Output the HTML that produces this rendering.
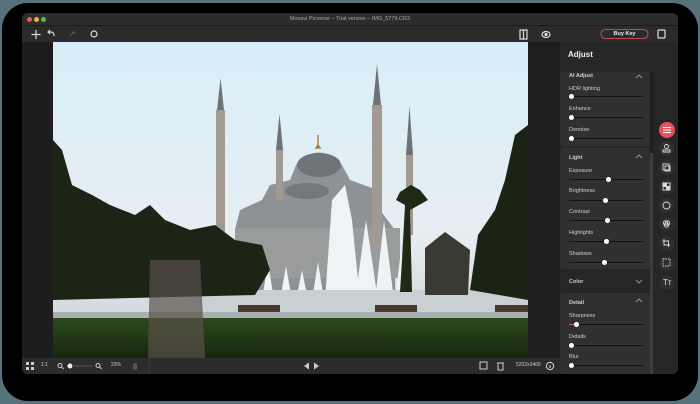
<!DOCTYPE html>
<html><head><meta charset="utf-8"><style>
*{margin:0;padding:0;box-sizing:border-box}
body{width:700px;height:404px;background:#56727a;position:relative;overflow:hidden;font-family:"Liberation Sans",sans-serif}
.shadow{position:absolute;left:2px;top:3px;width:696px;height:398px;background:#000;border-radius:26px}
.win{position:absolute;left:22px;top:13px;width:656px;height:361px;background:#2a2a2a;border-radius:6px;overflow:hidden}
.abs{position:absolute}
.t{position:absolute;color:#cfcfcf;font-size:5.5px;white-space:nowrap}
.card{position:absolute;left:538px;width:90px;background:#303030;border-radius:3px}
.track{position:absolute;height:1px;background:#111;width:74px;left:547px}
.knob{position:absolute;width:5px;height:5px;border-radius:50%;background:#fff}
.ic{position:absolute;width:15px;height:15px;border-radius:50%;background:#2f2f2f;left:637px}
</style></head><body>
<div class="shadow"></div>
<div class="win">
 <div class="abs" style="left:0;top:0;width:656px;height:13px;background:#2c2c2c;border-bottom:1px solid #1a1a1a"></div>
 <div class="abs" style="left:5px;top:4px;width:5px;height:5px;border-radius:50%;background:#ee5a55"></div>
 <div class="abs" style="left:12px;top:4px;width:5px;height:5px;border-radius:50%;background:#e7b33a"></div>
 <div class="abs" style="left:19px;top:4px;width:5px;height:5px;border-radius:50%;background:#4fbf4a"></div>
 <div class="t" style="left:0;width:656px;text-align:center;top:3px;font-size:5.5px;color:#aaa">Movavi Picverse – Trial version – IMG_5779.CR2</div>
 <div class="abs" style="left:0;top:14px;width:656px;height:15px;background:#2b2b2b"></div>
 <svg class="abs" style="left:0;top:13px" width="656" height="17" fill="none" stroke="#ddd" stroke-width="1.2">
  <path d="M14 4v9M9.5 8.5h9"/>
  <path d="M32 10v-1a3 3 0 0 0-3-3h-3M28 4l-2 2 2 2"/>
  <path d="M48 10l4-4M50 6h2v2" stroke="#555"/>
  <circle cx="72" cy="8" r="3"/>
  <path d="M498 4h7v9h-7zM501.5 4v9"/>
  <ellipse cx="524" cy="8.5" rx="4" ry="3"/><circle cx="524" cy="8.5" r="1" fill="#ddd"/>
  <rect x="579" y="3.5" width="47" height="9" rx="4.5" stroke="#c04a5a" stroke-width="1.1"/>
  <rect x="636" y="4" width="7" height="8" rx="1"/>
 </svg>
 <div class="t" style="left:579px;top:18px;width:47px;text-align:center;font-weight:bold;color:#eee;font-size:5.5px">Buy Key</div>
 <div class="abs" style="left:0;top:29px;width:538px;height:316px;background:#1d1d1d"></div>
 <svg class="abs" style="left:31px;top:29px" width="475" height="316" viewBox="53 42 475 316">
  <defs>
   <linearGradient id="sky" x1="0" y1="0" x2="0" y2="1"><stop offset="0" stop-color="#d9eef8"/><stop offset="0.6" stop-color="#e6eef2"/><stop offset="1" stop-color="#c8d0d6"/></linearGradient>
   <linearGradient id="gr" x1="0" y1="0" x2="0" y2="1"><stop offset="0" stop-color="#2d4a1c"/><stop offset="1" stop-color="#16260f"/></linearGradient>
  </defs>
  <rect x="53" y="42" width="475" height="316" fill="url(#sky)"/>
  <path d="M235 230 L240 210 L262 200 L270 185 L290 180 L296 165 Q319 140 342 165 L350 180 L372 188 L380 210 L395 230 L395 300 L235 300Z" fill="#8e9296"/>
  <ellipse cx="319" cy="165" rx="22" ry="12" fill="#6e7478"/>
  <ellipse cx="307" cy="191" rx="22" ry="8" fill="#72787c"/>
  <path d="M318 135v10l-2 3h4l-2-3" stroke="#a8893c" stroke-width="1.5"/>
  <rect x="235" y="228" width="165" height="50" fill="#9a9c9c"/>
  <g fill="#a09a92">
   <rect x="216" y="110" width="9" height="122"/><path d="M217 110 L220.5 78 L224 110Z" fill="#6e7276"/>
   <rect x="276" y="150" width="7" height="50"/><path d="M276 150 L279.5 114 L283 150Z" fill="#6e7276"/>
   <rect x="372" y="105" width="10" height="140"/><path d="M373 105 L377 64 L381 105Z" fill="#6e7276"/>
   <rect x="406" y="155" width="7" height="80"/><path d="M406 155 L409.5 106 L413 155Z" fill="#6e7276"/>
  </g>
  <g fill="#eef3f6">
   <path d="M262 300 L268 262 L274 300Z"/><path d="M280 300 L286 266 L292 300Z"/><path d="M296 300 L302 270 L308 300Z"/>
   <path d="M312 300 L318 262 L324 300Z"/>
   <path d="M325 300 L332 200 L345 185 L352 220 L360 300Z"/>
   <path d="M355 300 L366 220 L378 300Z"/>
   <path d="M375 300 L384 220 L394 300Z"/>
   <path d="M395 300 L401 250 L408 300Z"/>
  </g>
  <rect x="200" y="290" width="328" height="24" fill="#c9d0d4"/>
  <path d="M53 140 L62 150 L72 185 L92 195 L110 205 L135 215 L150 205 L165 220 L190 230 L215 225 L235 240 L262 245 L270 270 L255 295 L53 300Z" fill="#1c2416"/>
  <path d="M411 185 L400 192 L396 200 L405 205 L402 260 L400 292 L412 292 L410 210 L428 200 L420 190Z" fill="#1f2a16"/>
  <path d="M528 125 L515 135 L505 180 L495 210 L478 235 L470 290 L528 300Z" fill="#1a2314"/>
  <path d="M425 248 L445 232 L470 250 L468 295 L425 295Z" fill="#3a3a32"/>
  <rect x="238" y="305" width="42" height="8" fill="#4b3a30"/>
  <rect x="375" y="305" width="42" height="8" fill="#4b3a30"/>
  <rect x="495" y="305" width="33" height="8" fill="#4b3a30"/>
  <rect x="53" y="312" width="475" height="6" fill="#a9b0b2"/>
  <rect x="53" y="318" width="475" height="40" fill="url(#gr)"/>
  <path d="M150 260 L200 260 L205 358 L148 358Z" fill="#5a5048" opacity="0.7"/>
 </svg>
 <div class="abs" style="left:0;top:345px;width:538px;height:16px;background:#2c2c2c"></div>
 <svg class="abs" style="left:0;top:345px" width="538" height="16" fill="#ccc" stroke="#ccc">
  <g stroke="none"><rect x="4" y="4" width="3" height="3"/><rect x="9" y="4" width="3" height="3"/><rect x="4" y="9" width="3" height="3"/><rect x="9" y="9" width="3" height="3"/></g>
  <circle cx="38" cy="7.5" r="2" fill="none"/><path d="M39.5 9l2 2"/>
  <circle cx="48" cy="8" r="2.5" stroke="none" fill="#eee"/><path d="M50 8h20" stroke="#555"/>
  <circle cx="76" cy="7.5" r="2" fill="none"/><path d="M77.5 9l2 2"/>
  <rect x="111" y="5" width="4" height="7" rx="2" fill="#555" stroke="none"/>
  <path d="M127 1v15" stroke="#3a3a3a"/>
  <path d="M282 8l5-3.5v7z M292 4.5v7l5-3.5z" stroke="none"/>
  <rect x="458" y="4" width="7" height="7" fill="none"/>
  <rect x="476" y="5" width="5" height="7" fill="none"/><path d="M475 5h7"/>
 </svg>
 <div class="t" style="left:19px;top:349px;font-size:5px">1:1</div>
 <div class="t" style="left:89px;top:349px;font-size:5px">23%</div>
 <div class="t" style="left:494px;top:349px;font-size:5px">5202x3465</div>
 <svg class="abs" style="left:523px;top:348px" width="10" height="10"><circle cx="5" cy="5" r="3.6" fill="none" stroke="#ddd"/><path d="M5 4v3" stroke="#ddd"/></svg>
 <div class="abs" style="left:506px;top:29px;width:32px;height:316px;background:#1e1e1e"></div>
 <div class="abs" style="left:538px;top:29px;width:118px;height:332px;background:#262626"></div>
 <div class="t" style="left:546px;top:37px;font-size:8px;font-weight:bold;color:#eee">Adjust</div>
 <div class="abs" style="left:628px;top:59px;width:3px;height:302px;background:#1e1e1e"></div>
 <div class="abs" style="left:628px;top:140px;width:3px;height:221px;background:#3c3c3c"></div>

 <div class="card" style="top:59px;height:74px"></div>
 <div class="t" style="left:547px;top:60px;font-weight:bold">AI Adjust</div>
 <div class="t" style="left:547px;top:73px">HDR lighting</div><div class="track" style="top:83px"></div><div class="knob" style="left:547px;top:81px"></div>
 <div class="t" style="left:547px;top:93px">Enhance</div><div class="track" style="top:104px"></div><div class="knob" style="left:547px;top:102px"></div>
 <div class="t" style="left:547px;top:114px">Denoise</div><div class="track" style="top:125px"></div><div class="knob" style="left:547px;top:123px"></div>

 <div class="card" style="top:135px;height:121px"></div>
 <div class="t" style="left:547px;top:142px;font-weight:bold">Light</div>
 <div class="t" style="left:547px;top:155px">Exposure</div><div class="track" style="top:166px"></div><div class="knob" style="left:584px;top:164px"></div>
 <div class="t" style="left:547px;top:175px">Brightness</div><div class="track" style="top:187px"></div><div class="knob" style="left:581px;top:185px"></div>
 <div class="t" style="left:547px;top:196px">Contrast</div><div class="track" style="top:207px"></div><div class="knob" style="left:583px;top:205px"></div>
 <div class="t" style="left:547px;top:217px">Highlights</div><div class="track" style="top:228px"></div><div class="knob" style="left:582px;top:226px"></div>
 <div class="t" style="left:547px;top:238px">Shadows</div><div class="track" style="top:249px"></div><div class="knob" style="left:580px;top:247px"></div>

 <div class="t" style="left:547px;top:266px;font-weight:bold">Color</div>
 <div class="card" style="top:280px;height:81px"></div>
 <div class="t" style="left:547px;top:287px;font-weight:bold">Detail</div>
 <div class="t" style="left:547px;top:300px">Sharpness</div><div class="track" style="top:311px"></div><div class="abs" style="left:547px;top:311px;width:7px;height:1px;background:#b55"></div><div class="knob" style="left:552px;top:309px"></div>
 <div class="t" style="left:547px;top:321px">Details</div><div class="track" style="top:332px"></div><div class="knob" style="left:547px;top:330px"></div>
 <div class="t" style="left:547px;top:341px">Blur</div><div class="track" style="top:352px"></div><div class="knob" style="left:547px;top:350px"></div>
 <svg class="abs" style="left:612px;top:60px" width="10" height="230" fill="none" stroke="#aaa" stroke-width="0.8">
  <path d="M2 5l3-3 3 3"/><path d="M2 85l3-3 3 3"/><path d="M2 207l3 3 3-3"/><path d="M2 229l3-3 3 3"/>
 </svg>
 <div class="abs" style="left:637px;top:109px;width:16px;height:16px;border-radius:50%;background:#e9505e"></div>
 <svg class="abs" style="left:637px;top:109px" width="16" height="16" stroke="#fff" stroke-width="0.9"><path d="M4 5.5h8M4 8h8M4 10.5h8"/></svg>
 <div class="ic" style="top:128px"></div><div class="ic" style="top:147px"></div><div class="ic" style="top:166px"></div><div class="ic" style="top:185px"></div><div class="ic" style="top:204px"></div><div class="ic" style="top:223px"></div><div class="ic" style="top:243px"></div><div class="ic" style="top:262px"></div>
 <svg class="abs" style="left:637px;top:128px" width="15" height="150" fill="none" stroke="#ddd" stroke-width="0.9">
  <circle cx="7.5" cy="5.5" r="2"/><path d="M4 11h7v-2h-7z"/>
  <rect x="4" y="23" width="6" height="6"/><rect x="6" y="25" width="5" height="5"/>
  <rect x="4" y="42" width="7" height="7"/><rect x="4" y="42" width="3.5" height="3.5" fill="#ddd"/><rect x="7.5" y="45.5" width="3.5" height="3.5" fill="#ddd"/>
  <circle cx="7.5" cy="64.5" r="3.5"/>
  <circle cx="6.5" cy="82" r="2.2"/><circle cx="8.5" cy="82" r="2.2"/><circle cx="7.5" cy="84" r="2.2"/>
  <path d="M5 98v6h6M3.5 100h6v6"/>
  <rect x="4" y="118" width="7" height="7" stroke-dasharray="1.5 1"/>
 </svg>
 <div class="t" style="left:641px;top:265px;font-size:8px;color:#ddd">Tт</div>
</div>
</body></html>
